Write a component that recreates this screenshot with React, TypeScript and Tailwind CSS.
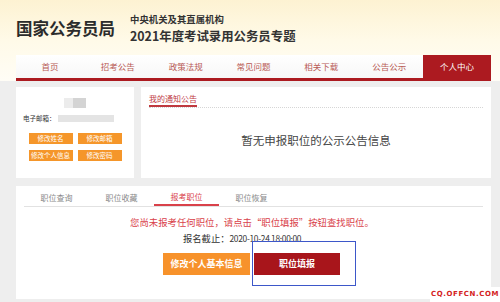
const NAV = ["首页", "招考公告", "政策法规", "常见问题", "相关下载", "公告公示", "个人中心"];
const TABS = ["职位查询", "职位收藏", "报考职位", "职位恢复"];

function OrangeBtn({ label }: { label: string }) {
  return (
    <div className="flex h-[11px] w-[44px] items-center justify-center bg-[#f5962a] text-[6.5px] leading-none text-white">
      {label}
    </div>
  );
}

export default function App() {
  return (
    <div
      className="relative h-[302px] w-[500px] overflow-hidden bg-[#eeeeee]"
      style={{ fontFamily: '"Noto Sans CJK SC", "Noto Sans", sans-serif' }}
    >
      {/* Header */}
      <div className="bg-gradient-to-b from-[#fdf2d2] via-[#fffae8] to-[#fffdf6]">
        <div className="flex h-[55px] items-center pl-[16px] pt-[2px]">
          <div className="text-[16.5px] font-bold leading-none text-[#2b2b2b]">国家公务员局</div>
          <div className="ml-[15px] flex flex-col">
            <div className="text-[9.4px] font-bold leading-none text-[#333]">中央机关及其直属机构</div>
            <div className="mt-[5px] text-[12.4px] font-bold leading-none text-[#333]">2021年度考试录用公务员专题</div>
          </div>
        </div>
        {/* Nav */}
        <div className="ml-[16px] w-[475px]">
          <div className="flex h-[23px] bg-gradient-to-b from-white to-[#f7f7f7]">
            {NAV.map((n, i) => (
              <div
                key={n}
                className={
                  i === NAV.length - 1
                    ? "flex flex-1 items-center justify-center bg-[#ac1a20] text-[8.5px] text-white"
                    : "flex flex-1 items-center justify-center text-[8.5px] text-[#b85a55]"
                }
              >
                {n}
              </div>
            ))}
          </div>
          <div className="h-[3px] bg-[#ac1a20]" />
        </div>
      </div>

      {/* Top panels */}
      <div className="ml-[16px] mt-[6px] flex w-[475px] gap-[7px]">
        <div className="flex h-[91px] w-[118px] flex-col items-center bg-white">
          <div className="mt-[11px] flex h-[10px] w-[22px]">
            <div className="w-[9px] bg-[#ececec] blur-[0.5px]" />
            <div className="w-[13px] bg-[#d4d4d4] blur-[0.5px]" />
          </div>
          <div className="mt-[7px] flex w-[104px] items-center">
            <span className="text-[6.5px] leading-none text-[#333]">电子邮箱：</span>
            <div className="ml-[2px] h-[7px] w-[56px] bg-[#e4e4e4] blur-[0.5px]" />
          </div>
          <div className="mt-[11px] grid grid-cols-2 gap-x-[5px] gap-y-[6px]">
            <OrangeBtn label="修改姓名" />
            <OrangeBtn label="修改邮箱" />
            <OrangeBtn label="修改个人信息" />
            <OrangeBtn label="修改密码" />
          </div>
        </div>
        <div className="flex h-[91px] flex-1 flex-col bg-white px-[8px]">
          <div className="mt-[8px] flex items-end border-b border-dotted border-[#d6d6d6]">
            <div className="border-b-2 border-[#c0393f] pb-[2px] text-[8px] leading-none text-[#c0393f]">
              我的通知公告
            </div>
          </div>
          <div className="mt-[27px] text-center text-[11.5px] leading-none text-[#444]">暂无申报职位的公示公告信息</div>
        </div>
      </div>

      {/* Bottom panel */}
      <div className="ml-[16px] mt-[8px] flex h-[113px] w-[475px] flex-col bg-white px-[8px]">
        <div className="mt-[4px] flex border-b border-[#e2e2e2]">
          {TABS.map((t, i) => (
            <div
              key={t}
              className={
                i === 2
                  ? "-mb-px flex h-[16px] w-[65px] items-center justify-center border-b-2 border-[#d9414a] text-[8px] text-[#d9414a]"
                  : "flex h-[16px] w-[65px] items-center justify-center text-[8px] text-[#888]"
              }
            >
              {t}
            </div>
          ))}
        </div>
        <div className="mt-[11px] pl-[106px] text-[9.4px] leading-none text-[#d9414a]">
          您尚未报考任何职位，请点击“职位填报”按钮查找职位。
        </div>
        <div className="mt-[7px] pl-[159px] text-[9.3px] leading-none text-[#333]">
          报名截止：<span className="text-[8.4px] tracking-[-0.3px]">2020-10-24 18:00:00</span>
        </div>
        <div className="mt-[9px] flex gap-[4px] pl-[139px]">
          <div className="flex h-[22px] w-[87px] items-center justify-center bg-[#f7922b] text-[9px] font-bold text-white">
            修改个人基本信息
          </div>
          <div className="flex h-[22px] w-[86px] items-center justify-center bg-[#a8151b] text-[9px] font-bold text-white">
            职位填报
          </div>
        </div>
      </div>

      {/* Annotation box */}
      <div className="absolute left-[252px] top-[241px] h-[45px] w-[104px] border-[1.5px] border-[#3d57c9]" />

      {/* Watermark */}
      <div className="absolute bottom-0 right-0 flex h-[15px] w-[70px] items-center justify-center bg-white">
        <span className="text-[7px] font-bold leading-none tracking-[0.6px] text-[#d42222]" style={{ fontFamily: '"DejaVu Sans", sans-serif' }}>
          CQ.OFFCN.COM
        </span>
      </div>
    </div>
  );
}
